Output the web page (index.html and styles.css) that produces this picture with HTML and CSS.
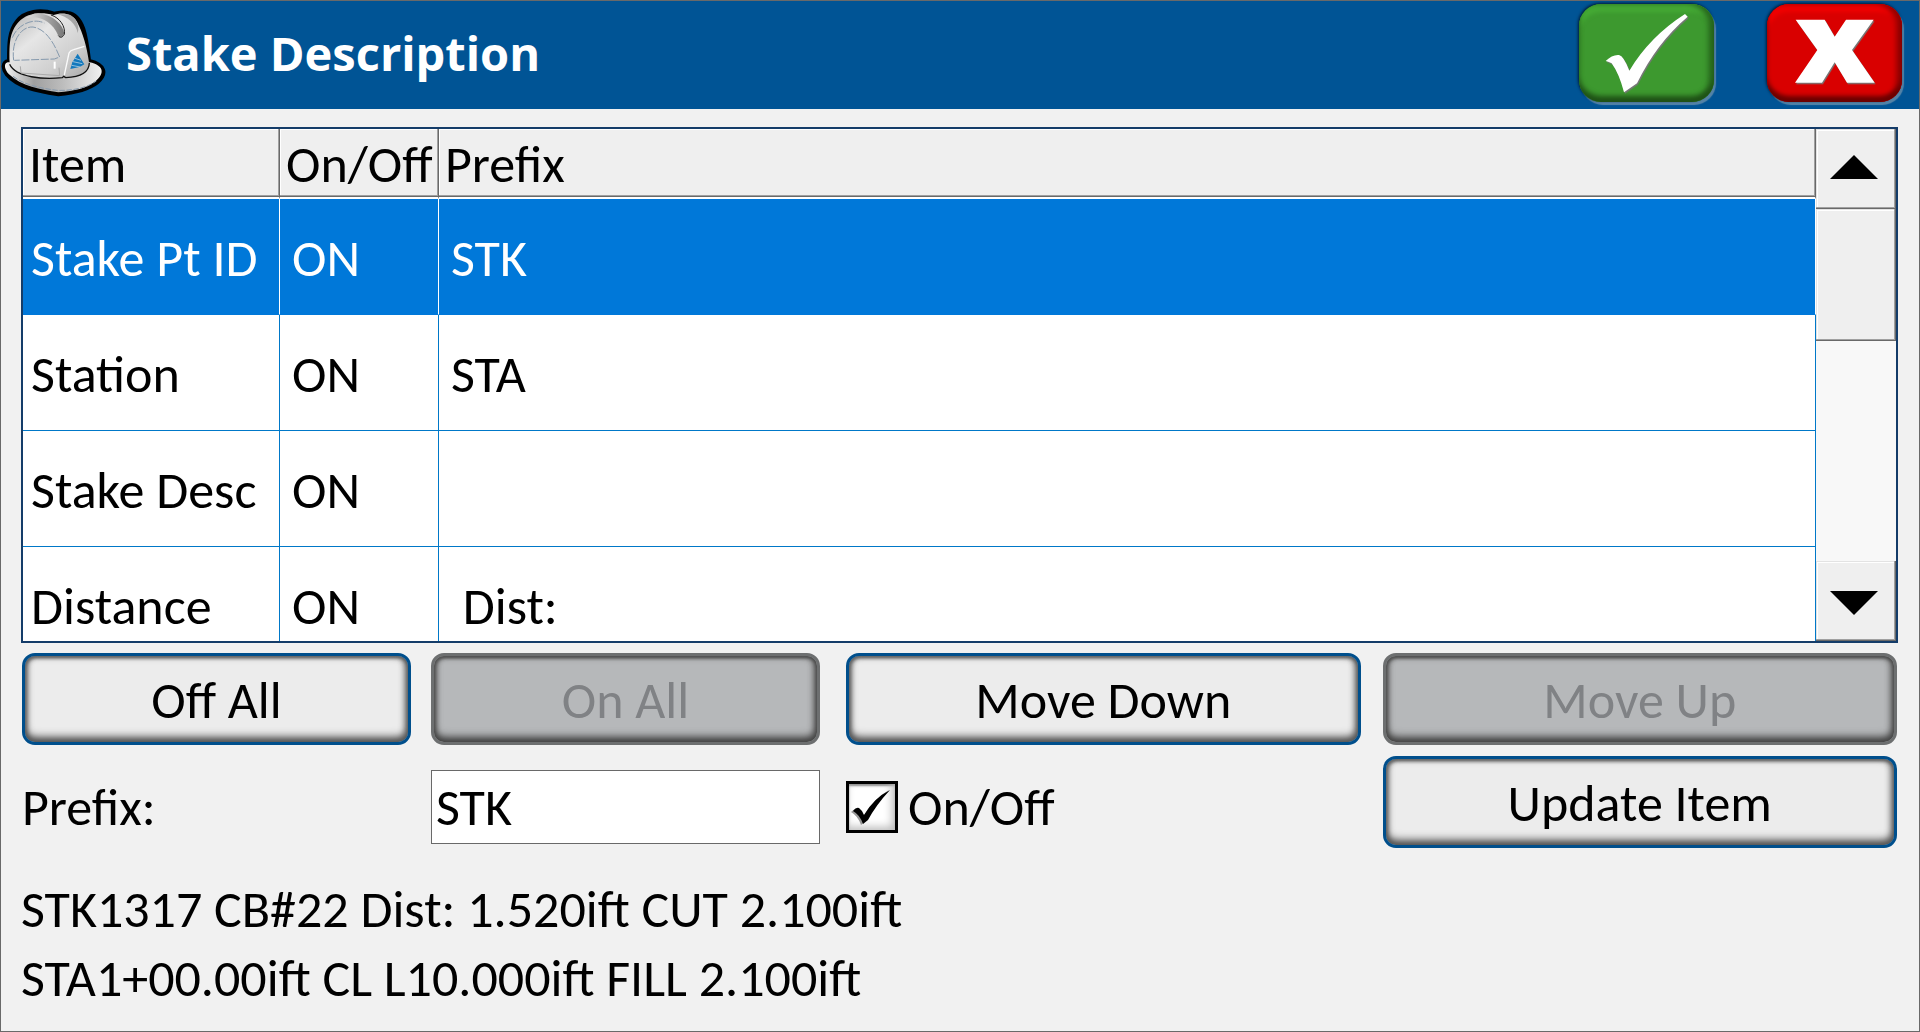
FILE: index.html
```html
<!DOCTYPE html>
<html lang="en">
<head>
<meta charset="utf-8">
<title>Stake Description</title>
<link rel="stylesheet" href="styles.css">
</head>
<body>
<div class="window">
  <header class="titlebar">
    <svg class="hat" viewBox="0 0 318 324" aria-hidden="true">
      <defs>
        <linearGradient id="shell" x1="0" y1="0" x2="1" y2="1">
          <stop offset="0" stop-color="#b4b4b4"/><stop offset=".35" stop-color="#e6e6e6"/><stop offset=".7" stop-color="#cfcfcf"/><stop offset="1" stop-color="#a8a8a8"/>
        </linearGradient>
        <linearGradient id="brim" x1="0" y1="0" x2="1" y2="0">
          <stop offset="0" stop-color="#f4f4f4"/><stop offset=".3" stop-color="#a0a0a0"/><stop offset=".6" stop-color="#bdbdbd"/><stop offset="1" stop-color="#f0f0f0"/>
        </linearGradient>
        <linearGradient id="ridge" x1="0" y1="0" x2="1" y2="0">
          <stop offset="0" stop-color="#e0e0e0"/><stop offset="1" stop-color="#777"/>
        </linearGradient>
      </defs>
      <path d="M22 178 C2 182 2 204 16 222 C50 262 110 272 172 282 C215 278 262 268 290 246 C322 218 314 190 266 178 C258 110 250 40 200 34 C185 30 172 34 160 36 C120 22 70 28 46 60 C22 90 22 130 22 178Z" fill="#000" stroke="#000" stroke-width="8" stroke-linejoin="round"/>
      <path d="M20 184 C6 188 12 208 24 220 C60 256 120 266 172 274 C220 270 258 262 284 240 C314 216 306 192 266 184Z" fill="url(#brim)"/>
      <path d="M26 186 C24 120 28 92 52 64 C78 34 122 32 158 42 C180 34 212 34 228 62 C246 96 258 140 264 184 C262 212 240 226 190 228 C120 238 40 226 26 186Z" fill="url(#shell)"/>
      <path d="M26 190 C44 230 130 236 184 230 L188 226 L194 230 C240 228 264 212 265 186" fill="none" stroke="#111" stroke-width="4"/>
      <path d="M98 38 C140 34 182 60 190 96 C186 108 178 112 172 104 C154 60 112 40 74 52Z" fill="url(#ridge)"/>
      <path d="M150 42 C176 50 194 76 190 100 C184 110 178 112 172 104" fill="none" stroke="#222" stroke-width="3"/>
      <path d="M168 40 C200 46 226 70 230 96 C238 80 224 40 196 40Z" fill="#999" opacity=".8"/>
      <path d="M34 110 C50 70 96 50 130 66 M38 178 C30 120 60 76 96 78 C134 84 158 124 176 168 L160 174 L40 178" fill="none" stroke="#8599ad" stroke-width="3" stroke-dasharray="24 5"/>
      <path d="M58 196 L60 216 L176 224 L174 200" fill="none" stroke="#aaa" stroke-width="3"/>
      <path d="M161 182 V203" stroke="#fff" stroke-width="6"/>
      <path d="M190 222 L204 156 Q208 148 218 146 L250 136" fill="none" stroke="#fafafa" stroke-width="4"/>
      <path d="M230 158 L250 190 L236 198 L208 204 L214 184Z" fill="#1278bd"/>
      <path d="M222 172 L240 178 M216 182 L244 188 M212 193 L238 198" stroke="#d5e2eb" stroke-width="2"/>
      <path d="M36 226 C70 252 120 262 168 268 C220 270 262 258 286 240" fill="none" stroke="#8599ad" stroke-width="3" stroke-dasharray="16 5"/>
    </svg>
    <h1 class="title">Stake Description</h1>
    <div class="actions">
      <button class="action accept" type="button" aria-label="Accept">
        <svg viewBox="58 12 405 294" aria-hidden="true">
          <path class="mark" d="M138 183 Q158 163 178 165 Q192 168 209 212 Q270 110 376 42 L384 50 Q290 130 232 250 L193 277 Q178 220 156 190 Q148 185 138 183Z"/>
        </svg>
      </button>
      <button class="action cancel" type="button" aria-label="Cancel">
        <svg viewBox="622 12 405 294" aria-hidden="true">
          <path class="mark" d="M708 59H795L825 110L859 59H942L877 150L945 248H862L825 187L787 248H706L773 150Z"/>
        </svg>
      </button>
    </div>
  </header>

  <main class="content">
    <section class="list">
      <div class="list-view">
        <table class="items">
          <colgroup><col class="col-item"><col class="col-state"><col></colgroup>
          <thead>
            <tr><th scope="col">Item</th><th scope="col">On/Off</th><th scope="col">Prefix</th></tr>
          </thead>
          <tbody>
            <tr class="selected"><td>Stake Pt ID</td><td>ON</td><td>STK</td></tr>
            <tr><td>Station</td><td>ON</td><td>STA</td></tr>
            <tr><td>Stake Desc</td><td>ON</td><td></td></tr>
            <tr><td>Distance</td><td>ON</td><td>&nbsp;Dist:</td></tr>
          </tbody>
        </table>
      </div>
      <div class="scrollbar">
        <button class="scroll-button" type="button" aria-label="Scroll up">
          <svg width="48" height="24" viewBox="0 0 48 24" aria-hidden="true"><path d="M24 0L48 24H0Z"/></svg>
        </button>
        <div class="thumb"></div>
        <button class="scroll-button last" type="button" aria-label="Scroll down">
          <svg width="48" height="24" viewBox="0 0 48 24" aria-hidden="true"><path d="M0 0H48L24 24Z"/></svg>
        </button>
      </div>
    </section>

    <div class="controls">
      <div class="row">
        <div class="half">
          <button class="button" type="button">Off All</button>
          <button class="button" type="button" disabled>On All</button>
        </div>
        <div class="half wide">
          <button class="button" type="button">Move Down</button>
          <button class="button" type="button" disabled>Move Up</button>
        </div>
      </div>

      <div class="row">
        <div class="half">
          <label class="entry" for="prefix">Prefix:</label>
          <input class="entry field" id="prefix" type="text" value="STK">
        </div>
        <div class="half wide">
          <label class="entry toggle">
            <span class="box">
              <input class="check" type="checkbox" checked>
              <svg class="tick" viewBox="0 0 52 52" aria-hidden="true">
                <path class="tick-shade" d="M5 31Q9 27 12 28Q15 30 17 36Q27 18 43 9Q29 25 20 40L15 44Q12 35 5 31Z"/>
                <path d="M7 30Q10 26 13 27Q16 29 18 34Q28 17 44 9Q30 24 22 39L17 43Q14 34 7 30Z"/>
              </svg>
            </span>
            <span>On/Off</span>
          </label>
          <button class="button" type="button">Update Item</button>
        </div>
      </div>
    </div>

    <div class="preview">
      <p>STK1317 CB#22 Dist: 1.520ift CUT 2.100ift</p>
      <p>STA1+00.00ift CL L10.000ift FILL 2.100ift</p>
    </div>
  </main>
</div>
</body>
</html>
```
FILE: styles.css
```css
* {
  box-sizing: border-box;
}

body {
  margin: 0;
  color: #000;
  background: #f1f1f1;
  font: 52px/70px Calibri, Carlito, Lato, "Liberation Sans", sans-serif;
}

button,
input {
  margin: 0;
  padding: 0;
  border: 0;
  color: inherit;
  font: inherit;
}

.window {
  display: flex;
  flex-direction: column;
  height: 100vh;
  min-height: 800px;
  border: 1px solid #696969;
}

/* Title bar */

.titlebar {
  display: flex;
  align-items: center;
  flex: none;
  height: 108px;
  padding-right: 17px;
  background: #005495;
}

.hat {
  flex: none;
  width: 106px;
  height: 108px;
}

.title {
  flex: 1;
  margin: 0 0 0 19px;
  padding-bottom: 4px;
  color: #fff;
  font: bold 47px/68px "Open Sans", "Noto Sans", sans-serif;
}

.actions {
  display: flex;
  gap: 53px;
  padding-bottom: 4px;
}

.action {
  width: 135px;
  height: 98px;
  border-radius: 22px;
}

.action svg {
  display: block;
  width: 100%;
  height: 100%;
}

.accept {
  background: #3d992f;
  box-shadow: inset 0 -6px 5px #1f5216, inset -6px 0 5px #2a6d20, inset 0 8px 4px #45aa35, -1px -1px 3px #001c38, 2px 3px 1px #5685a8;
}

.cancel {
  background: #d90000;
  box-shadow: inset 0 -6px 4px #6b0000, inset -6px 0 5px #960000, inset 0 8px 4px #f00000, -1px -1px 3px #001c38, 2px 3px 1px #5685a8;
}

.mark {
  fill: #fff;
  filter: drop-shadow(3px 4px 1px #777);
}

/* Content */

.content {
  display: flex;
  flex: 1;
  flex-direction: column;
  min-height: 0;
  padding: 18px 21px 18px 20px;
}

.list {
  display: flex;
  flex: 1 1 0;
  min-height: 0;
  border: 2px solid #143c69;
  background: #fff;
}

.list-view {
  flex: 1;
  overflow: hidden;
}

.items {
  width: 100%;
  border-spacing: 0;
  table-layout: fixed;
}

.col-item {
  width: 257px;
}

.col-state {
  width: 159px;
}

.items th {
  height: 70px;
  padding: 2px 0 0 6px;
  border-right: 1px solid #696969;
  border-bottom: 2px solid #fff;
  background: #efefef;
  box-shadow: inset 0 -1px #696969, inset -1px -2px #a0a0a0, inset 1px 1px #fff;
  font-weight: normal;
  line-height: 66px;
  text-align: left;
  white-space: nowrap;
}

.items td {
  height: 116px;
  padding: 2px 0 0 12px;
  border-right: 1px solid #0078c8;
  border-bottom: 1px solid #0078c8;
  white-space: nowrap;
}

.items td:first-child {
  padding-left: 8px;
}

.items .selected td {
  border-color: #fff;
  border-bottom-color: #0078d9;
  background: #0078d9;
  color: #fff;
}

.scrollbar {
  display: flex;
  flex: none;
  flex-direction: column;
  width: 80px;
  background: #f8f8f8;
}

.scroll-button,
.thumb {
  flex: none;
  background: #efefef;
  box-shadow: inset -1px -1px #696969, inset -2px -2px #a0a0a0, inset 1px 1px #e3e3e3, inset 2px 2px #fff;
}

.scroll-button {
  display: grid;
  place-items: center;
  height: 80px;
  padding: 0 4px 4px 0;
}

.thumb {
  height: 132px;
}

.last {
  margin-top: auto;
  padding: 4px 4px 0 0;
}

/* Controls */

.controls {
  display: grid;
  gap: 11px;
  padding: 10px 1px 0;
}

.row {
  display: grid;
  grid-template-columns: 798fr 1051fr;
  gap: 26px;
}

.half {
  display: grid;
  grid-template-columns: 1fr 1fr;
  align-items: center;
  gap: 20px;
}

.wide {
  gap: 22px;
}

.button {
  height: 92px;
  padding-top: 2px;
  border: 3px solid #004f8c;
  border-radius: 13px;
  background: #ececec;
  box-shadow: inset 0 -5px 9px #555, inset -2px 0 7px #666, inset 2px 0 5px #777, inset 0 2px 3px #666;
}

.button:disabled {
  border-color: #6d6f70;
  background: #b6b8ba;
  box-shadow: inset 0 -5px 9px #444, inset -2px 0 7px #555, inset 2px 0 5px #666, inset 0 2px 3px #444;
  color: #808285;
}

.entry {
  margin-top: 10px;
}

.field {
  width: 100%;
  height: 74px;
  padding: 0 4px;
  border: 1px solid #696969;
  background: #fff;
}

.toggle {
  display: flex;
  align-items: center;
  gap: 10px;
}

.box {
  display: grid;
  width: 52px;
  height: 52px;
}

.check,
.tick {
  grid-area: 1 / 1;
  width: 52px;
  height: 52px;
}

.check {
  appearance: none;
  border: 3px solid #000;
  background: #fff;
  box-shadow: inset -3px -3px 8px #bbb, inset 0 2px 2px #888;
}

.tick {
  visibility: hidden;
  pointer-events: none;
}

.check:checked + .tick {
  visibility: visible;
}

.tick-shade {
  fill: #999;
}

.preview {
  padding-top: 27px;
}

.preview p {
  margin: 0;
  line-height: 69px;
}
```
